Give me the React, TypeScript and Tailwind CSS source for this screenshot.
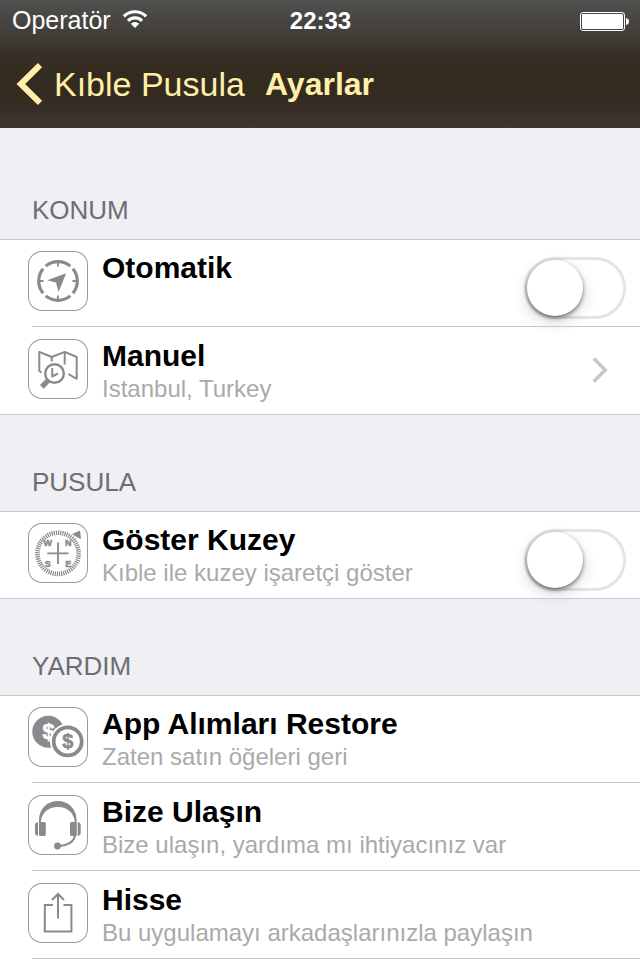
/**
 * Settings screen (Ayarlar)
 * Grouped list: location, compass and help sections
 */

import { useState } from 'react'
import type { ReactNode } from 'react'

type Row = {
  id: string
  title: string
  subtitle?: string
  icon: ReactNode
  kind: 'toggle' | 'disclosure' | 'action'
}

type Section = { label: string; rows: Row[]; continues?: boolean }

const GRAY = '#8a8a8a'

const LocateIcon = () => (
  <svg viewBox="0 0 60 60" className="size-15" fill="none" stroke={GRAY} aria-hidden="true">
    <circle cx="30" cy="30" r="19.3" strokeWidth="3.2" pathLength="400" strokeDasharray="88 12" strokeDashoffset="44" />
    <path d="M30 11v4.5M30 44.5v4.5M11 30h4.5M44.5 30h4.500" strokeWidth="1.8" />
    <path d="M38.2 22.3 30.5 41 28 31.6 19.2 29.2Z" fill={GRAY} stroke="none" />
  </svg>
)

const MapIcon = () => (
  <svg viewBox="0 0 60 60" className="size-15" fill="none" stroke={GRAY} strokeWidth="2" strokeLinejoin="round" aria-hidden="true">
    <path d="M13.5 33.5 11.3 32V12.9L23.7 18 36.7 12.9 48.7 18V39.8L40.3 35" />
    <path d="M23.7 18v4.5M36.7 13v12.5" />
    <circle cx="26.5" cy="34.5" r="9.3" strokeWidth="2.4" />
    <path d="M24.2 29v8.5l5.800-3.2" />
    <path d="M20.5 41.2 13.8 47.8" strokeWidth="5.2" />
  </svg>
)

const CompassIcon = () => (
  <svg viewBox="0 0 60 60" className="size-15" fill="none" stroke={GRAY} aria-hidden="true">
    <circle cx="30" cy="30.3" r="20.6" strokeWidth="4.6" pathLength="360" strokeDasharray="3.4 2.6" />
    <path d="M19.3 30.3h21.2M30 19.6v21.4" strokeWidth="1.800" />
    <path d="M44.8 11.2 51.6 8.2 52.4 15.4Z" fill={GRAY} />
    <g fill={GRAY} strokeWidth="0.5" fontSize="9" fontWeight="bold" textAnchor="middle">
      <text x="19.800" y="23.400">W</text>
      <text x="40.300" y="23.400">N</text>
      <text x="19.800" y="44.200">S</text>
      <text x="40.300" y="44.200">E</text>
    </g>
  </svg>
)

const CoinsIcon = () => (
  <svg viewBox="0 0 60 60" className="size-15" aria-hidden="true">
    <circle cx="20.3" cy="24.8" r="16" fill={GRAY} />
    <text x="20.5" y="32.3" fill="#fff" stroke="#fff" strokeWidth="0.6" fontSize="22" fontWeight="bold" textAnchor="middle">$</text>
    <circle cx="39.7" cy="34.4" r="17.8" fill="#fff" />
    <circle cx="39.7" cy="34.4" r="14" fill="none" stroke={GRAY} strokeWidth="3.8" />
    <text x="39.7" y="41.4" fill={GRAY} stroke={GRAY} strokeWidth="0.5" fontSize="20" fontWeight="bold" textAnchor="middle">$</text>
  </svg>
)

const HeadsetIcon = () => (
  <svg viewBox="0 0 60 60" className="size-15" fill={GRAY} aria-hidden="true">
    <path d="M11 28V25C11 14 19 6 29.8 6S48.6 14 48.6 25V28H46.8C46.5 18 39.5 12 29.8 12S13.1 18 12.8 28Z" />
    <rect x="11" y="27" width="6.8" height="14" rx="1.6" />
    <path d="M10 27.3v13.4C8 40.7 7 39.5 7 38V30C7 28.5 8 27.3 10 27.3Z" />
    <rect x="42" y="27" width="6.8" height="14" rx="1.6" />
    <path d="M49.7 27.3v13.4C51.7 40.7 52.7 39.5 52.7 38V30C52.7 28.5 51.7 27.3 49.7 27.3Z" />
    <path d="M47 40.5C46 47 39 50.8 30 51" fill="none" stroke={GRAY} strokeWidth="2" />
    <circle cx="29.5" cy="51" r="3.4" />
  </svg>
)

const ShareIcon = () => (
  <svg viewBox="0 0 60 60" className="size-15" fill="none" stroke={GRAY} strokeWidth="2" aria-hidden="true">
    <path d="M25 22H16.8V48.5H43.4V22H35.5" />
    <path d="M30 35.5V11" />
    <path d="M24 17 30 11 36 17" />
  </svg>
)

const SECTIONS: Section[] = [
  {
    label: 'KONUM',
    rows: [
      { id: 'auto', title: 'Otomatik', icon: <LocateIcon />, kind: 'toggle' },
      { id: 'manual', title: 'Manuel', subtitle: 'Istanbul, Turkey', icon: <MapIcon />, kind: 'disclosure' },
    ],
  },
  {
    label: 'PUSULA',
    rows: [
      {
        id: 'north',
        title: 'Göster Kuzey',
        subtitle: 'Kıble ile kuzey işaretçi göster',
        icon: <CompassIcon />,
        kind: 'toggle',
      },
    ],
  },
  {
    label: 'YARDIM',
    continues: true,
    rows: [
      { id: 'restore', title: 'App Alımları Restore', subtitle: 'Zaten satın öğeleri geri', icon: <CoinsIcon />, kind: 'action' },
      { id: 'contact', title: 'Bize Ulaşın', subtitle: 'Bize ulaşın, yardıma mı ihtiyacınız var', icon: <HeadsetIcon />, kind: 'action' },
      { id: 'share', title: 'Hisse', subtitle: 'Bu uygulamayı arkadaşlarınızla paylaşın', icon: <ShareIcon />, kind: 'action' },
    ],
  },
]

const StatusBar = () => (
  <div className="grid h-10 grid-cols-[1fr_auto_1fr] items-center pt-0.5 pr-[11px] pl-3 text-2xl text-white">
    <div className="flex items-center gap-3">
      <span className="text-[25px]">Operatör</span>
      <svg viewBox="0 0 24 18" className="mb-1 h-[18px] w-6" fill="none" stroke="#fff" strokeWidth="3.2" aria-hidden="true">
        <path d="M0.8 6.4A15.8 15.8 0 0 1 23.2 6.4" />
        <path d="M5 10.8A9.9 9.9 0 0 1 19 10.8" />
        <path d="M12 18 7.8 13.7A6 6 0 0 1 16.2 13.7Z" fill="#fff" stroke="none" />
      </svg>
    </div>
    <span className="font-bold">22:33</span>
    <svg viewBox="0 0 49 19" className="h-[19px] w-[49px] justify-self-end" aria-hidden="true">
      <rect x="0.5" y="0.5" width="44" height="18" rx="2.5" fill="none" stroke="#fff" />
      <rect x="2" y="2" width="41" height="15" rx="1" fill="#fff" />
      <path d="M46 6C48 6.5 49 7.8 49 9.5S48 12.5 46 13Z" fill="#fff" />
    </svg>
  </div>
)

const SettingsRow = ({ row, inset }: { row: Row; inset: boolean }) => {
  const [on, setOn] = useState(false)

  const body = (
    <>
      <span className="size-15 shrink-0 rounded-[14px] shadow-[inset_0_0_0_1px_#9b9b9b]">{row.icon}</span>
      <span className="min-w-0 flex-1 pl-3.5 text-left">
        <span className="block text-[30px] leading-[34px] font-bold text-black">{row.title}</span>
        {row.subtitle && (
          <span className="block truncate text-2xl leading-8 text-[#aaaaaa]">{row.subtitle}</span>
        )}
      </span>
    </>
  )

  return (
    <li className="relative h-22">
      {row.kind === 'toggle' ? (
        <label className="flex h-full w-full items-start pt-3 pr-3.5 pl-7">
          {body}
          <input
            type="checkbox"
            checked={on}
            onChange={(e) => setOn(e.target.checked)}
            className="mt-1.5 h-[62px] w-[102px] shrink-0 appearance-none rounded-full border-[3px] border-[#e5e5e5] before:block before:size-14 before:rounded-full before:bg-white before:shadow-[0_6px_16px_rgba(0,0,0,0.16),0_2px_4px_rgba(0,0,0,0.5)] before:transition-transform checked:border-[#4cd964] checked:bg-[#4cd964] checked:before:translate-x-10"
          />
        </label>
      ) : (
        <button type="button" className="flex h-full w-full items-start pt-3 pr-8 pl-7">
          {body}
          {row.kind === 'disclosure' && (
            <svg viewBox="0 0 16 26" className="mt-[18px] h-[26px] w-4 shrink-0" fill="none" stroke="#c7c7cc" strokeWidth="3.6" aria-hidden="true">
              <path d="M1.8 1.5 13.2 13 1.8 24.5" />
            </svg>
          )}
        </button>
      )}
      {/* Separator */}
      <div className={`absolute right-0 bottom-0 h-px bg-[#c8c7cc] ${inset ? 'left-8' : 'left-0'}`} />
    </li>
  )
}

export default function App() {
  return (
    <div className="flex min-h-screen flex-col bg-[#efeff4] font-['Liberation_Sans',Arial,sans-serif]">
      {/* Header */}
      <header className="bg-[linear-gradient(#50504e_0px,#44413e_28px,#3c372d_46px,#3a3028_52px,#342b20_74px,#342b20_96px,#382e27_110px,#3d3733_128px)]">
        <StatusBar />
        <nav className="flex h-22 items-center px-4 text-[34px] text-[#ffefa8]">
          <a href="#" className="flex items-center gap-[11px]">
            <svg viewBox="0 0 27 42" className="h-[42px] w-[27px]" fill="none" stroke="#ffefa8" strokeWidth="6" aria-hidden="true">
              <path d="M24 2.2 4.8 21 24 39.8" />
            </svg>
            <span>Kıble Pusula</span>
          </a>
          <h1 className="pl-5 text-[32px] font-bold">Ayarlar</h1>
        </nav>
      </header>

      {/* Grouped list */}
      <main className="flex flex-1 flex-col pt-[15px]">
        {SECTIONS.map((section) => (
          <section key={section.label} className={section.continues ? 'flex flex-1 flex-col' : ''}>
            <h2 className="flex h-24 items-end px-8 pb-[13px] text-[26px] leading-8 text-[#6d6d72]">{section.label}</h2>
            <ul className={`bg-white shadow-[inset_0_1px_0_#c8c7cc] ${section.continues ? 'flex-1' : ''}`}>
              {section.rows.map((row, index) => (
                <SettingsRow
                  key={row.id}
                  row={row}
                  inset={section.continues || index < section.rows.length - 1}
                />
              ))}
            </ul>
          </section>
        ))}
      </main>
    </div>
  )
}
